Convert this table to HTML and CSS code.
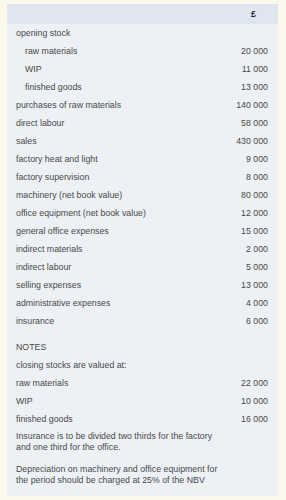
FILE: index.html
```html
<!DOCTYPE html>
<html>
<head>
<meta charset="utf-8">
<link rel="stylesheet" href="styles.css">
</head>
<body>
<div class="panel">
  <div class="head"><span class="cur">£</span></div>
  <div class="rows">
    <div class="row"><span>opening stock</span></div>
    <div class="row ind"><span>raw materials</span><span class="num">20 000</span></div>
    <div class="row ind"><span>WIP</span><span class="num">11 000</span></div>
    <div class="row ind"><span>finished goods</span><span class="num">13 000</span></div>
    <div class="row"><span>purchases of raw materials</span><span class="num">140 000</span></div>
    <div class="row"><span>direct labour</span><span class="num">58 000</span></div>
    <div class="row"><span>sales</span><span class="num">430 000</span></div>
    <div class="row"><span>factory heat and light</span><span class="num">9 000</span></div>
    <div class="row"><span>factory supervision</span><span class="num">8 000</span></div>
    <div class="row"><span>machinery (net book value)</span><span class="num">80 000</span></div>
    <div class="row"><span>office equipment (net book value)</span><span class="num">12 000</span></div>
    <div class="row"><span>general office expenses</span><span class="num">15 000</span></div>
    <div class="row"><span>indirect materials</span><span class="num">2 000</span></div>
    <div class="row"><span>indirect labour</span><span class="num">5 000</span></div>
    <div class="row"><span>selling expenses</span><span class="num">13 000</span></div>
    <div class="row"><span>administrative expenses</span><span class="num">4 000</span></div>
    <div class="row"><span>insurance</span><span class="num">6 000</span></div>
  </div>
  <div class="notes">
    <div class="row"><span>NOTES</span></div>
    <div class="row"><span>closing stocks are valued at:</span></div>
    <div class="row"><span>raw materials</span><span class="num">22 000</span></div>
    <div class="row"><span>WIP</span><span class="num">10 000</span></div>
    <div class="row"><span>finished goods</span><span class="num">16 000</span></div>
    <p class="para">Insurance is to be divided two thirds for the factory and one third for the office.</p>
    <p class="para">Depreciation on machinery and office equipment for the period should be charged at 25% of the NBV</p>
  </div>
</div>
</body>
</html>
```
FILE: styles.css
```css
html, body {
  margin: 0;
  padding: 0;
  background: #fcf9ec;
}
body {
  padding: 4px 8px 5px 7px;
  font-family: "Liberation Sans", Arial, sans-serif;
  font-size: 8.8px;
  color: #484848;
}
.panel {
  background: #edf1f6;
  padding-bottom: 10px;
}
.head {
  background: #dfe6ef;
  height: 20px;
  display: flex;
  align-items: center;
  justify-content: flex-end;
  padding-right: 22px;
}
.cur {
  font-weight: bold;
  color: #222;
  font-size: 8.8px;
}
.row {
  height: 18px;
  display: flex;
  align-items: center;
  justify-content: space-between;
  padding: 0 10px 0 9px;
}
.row.ind {
  padding-left: 18px;
}
.notes {
  margin-top: 8px;
}
.para {
  margin: 3px 0 11px 9px;
  width: 212px;
  line-height: 11px;
}
.para:last-child {
  margin-bottom: 0;
}
```
